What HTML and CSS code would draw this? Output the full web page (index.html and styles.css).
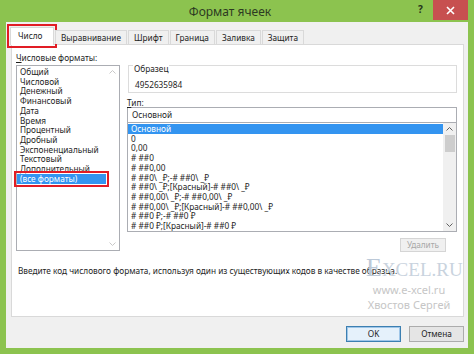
FILE: index.html
```html
<!DOCTYPE html>
<html lang="ru">
<head>
  <meta charset="UTF-8">
  <title>Формат ячеек</title>
  <link rel="stylesheet" href="styles.css">
</head>
<body>
  <div class="window">
    <div class="titlebar">
      <span class="title">Формат ячеек</span>
      <span class="help">?</span>
      <span class="close">
        <svg width="9" height="9" viewBox="0 0 9 9"><path d="M1 1L8 8M8 1L1 8" stroke="#fff" stroke-width="1.6"/></svg>
      </span>
    </div>

    <div class="dialog">
      <div class="tabs">
        <div class="tab active marked">Число</div>
        <div class="tab">Выравнивание</div>
        <div class="tab">Шрифт</div>
        <div class="tab">Граница</div>
        <div class="tab">Заливка</div>
        <div class="tab">Защита</div>
      </div>

      <div class="panel">
        <div class="columns">
          <div class="left">
            <div class="label"><u>Ч</u>исловые форматы:</div>
            <div class="listbox categories">
              <div class="items">
                <div class="item">Общий</div>
                <div class="item">Числовой</div>
                <div class="item">Денежный</div>
                <div class="item">Финансовый</div>
                <div class="item">Дата</div>
                <div class="item">Время</div>
                <div class="item">Процентный</div>
                <div class="item">Дробный</div>
                <div class="item">Экспоненциальный</div>
                <div class="item">Текстовый</div>
                <div class="item">Дополнительный</div>
                <div class="item selected marked">(все форматы)</div>
              </div>
              <div class="scrollbar disabled">
                <svg width="7" height="4" viewBox="0 0 7 4"><path d="M0.5 3.5L3.5 0.5L6.5 3.5" fill="none" stroke="#c8c8c8"/></svg>
                <svg width="7" height="4" viewBox="0 0 7 4"><path d="M0.5 0.5L3.5 3.5L6.5 0.5" fill="none" stroke="#c8c8c8"/></svg>
              </div>
            </div>
          </div>

          <div class="right">
            <div class="sample">
              <span class="legend">Образец</span>
              <div class="sample-value">4952635984</div>
            </div>
            <div class="label type-label"><u>Т</u>ип:</div>
            <div class="input">Основной</div>
            <div class="listbox types">
              <div class="items">
                <div class="item selected">Основной</div>
                <div class="item">0</div>
                <div class="item">0,00</div>
                <div class="item"># ##0</div>
                <div class="item"># ##0,00</div>
                <div class="item"># ##0\ _₽;-# ##0\ _₽</div>
                <div class="item"># ##0\ _₽;[Красный]-# ##0\ _₽</div>
                <div class="item"># ##0,00\ _₽;-# ##0,00\ _₽</div>
                <div class="item"># ##0,00\ _₽;[Красный]-# ##0,00\ _₽</div>
                <div class="item"># ##0 ₽;-# ##0 ₽</div>
                <div class="item"># ##0 ₽;[Красный]-# ##0 ₽</div>
              </div>
              <div class="scrollbar">
                <svg width="7" height="4" viewBox="0 0 7 4"><path d="M0.5 3.5L3.5 0.5L6.5 3.5" fill="none" stroke="#606060"/></svg>
                <div class="thumb"></div>
                <svg width="7" height="4" viewBox="0 0 7 4"><path d="M0.5 0.5L3.5 3.5L6.5 0.5" fill="none" stroke="#606060"/></svg>
              </div>
            </div>
            <div class="actions">
              <div class="btn small disabled">Удалить</div>
            </div>
          </div>
        </div>

        <p class="hint">Введите код числового формата, используя один из существующих кодов в качестве образца.</p>

        <!-- watermark over the panel -->
        <div class="watermark">
          <div class="wm-logo"><span class="wm-e">E</span>XCEL.RU</div>
          <div class="wm-line">www.e-xcel.ru</div>
          <div class="wm-line">Хвостов Сергей</div>
        </div>
      </div>

      <div class="footer">
        <div class="btn default">OK</div>
        <div class="btn">Отмена</div>
      </div>
    </div>
  </div>
</body>
</html>
```

FILE: styles.css
```css
body {
  margin: 0;
  font-family: 'Noto Sans', 'Open Sans', sans-serif;
  font-size: 8.25px;
  color: #1e1e1e;
  background-color: #8cc34f;
}
.window {
  width: 474px;
  height: 354px;
  overflow: hidden;
}
.titlebar {
  height: 22px;
  display: flex;
  align-items: flex-start;
}
.title {
  flex: 1;
  text-align: center;
  font-size: 12px;
  line-height: 24px;
  color: #2d3a22;
  padding-left: 42px;
}
.help {
  width: 12px;
  font-weight: bold;
  font-size: 10px;
  line-height: 18px;
  color: #26331c;
  margin-right: 3px;
}
.close {
  width: 35px;
  height: 20px;
  margin-right: 6px;
  background-color: #c75050;
  display: flex;
  align-items: center;
  justify-content: center;
}
.dialog {
  margin: 0 6px;
  height: 326px;
  background-color: #f0f0f0;
  padding: 5px 4px 0 5px;
  box-sizing: border-box;
}
.tabs {
  display: flex;
  align-items: flex-end;
  height: 17px;
  position: relative;
  z-index: 1;
}
.tab {
  height: 14px;
  line-height: 13px;
  padding: 0 5px;
  border: 1px solid #d9d9d9;
  border-bottom: none;
  background-color: #f0f0f0;
  margin-right: 1px;
  box-sizing: border-box;
  white-space: nowrap;
}
.tab.active {
  height: 18px;
  line-height: 16px;
  background-color: #fff;
  margin-left: -1px;
  margin-bottom: -1px;
  width: 44px;
  padding: 0 0 0 7px;
}
.marked {
  outline: 2px solid #e11d25;
  outline-offset: 1px;
}
.panel {
  position: relative;
  height: 273px;
  background-color: #fff;
  border: 1px solid #d9d9d9;
  box-sizing: border-box;
  padding: 7px 6px 0 4px;
}
.columns {
  display: flex;
  gap: 7px;
}
.left {
  width: 104px;
}
.right {
  width: 330px;
  padding-top: 13px;
}
.label {
  line-height: 11px;
  height: 13px;
}
.listbox {
  display: flex;
  border: 1px solid #abadb3;
  background-color: #fff;
  box-sizing: border-box;
}
.items {
  flex: 1;
  padding-top: 1px;
}
.item {
  height: 9.73px;
  line-height: 9.73px;
  padding-left: 3px;
  white-space: nowrap;
}
.item.selected {
  background-color: #3394f0;
  color: #fff;
}
.categories {
  height: 186px;
}
.scrollbar {
  width: 13px;
  display: flex;
  flex-direction: column;
  align-items: center;
  justify-content: space-between;
  padding: 4px 0;
  box-sizing: border-box;
}
.types {
  height: 110px;
}
.types .scrollbar {
  background-color: #f0f0f0;
  justify-content: flex-start;
}
.thumb {
  width: 10px;
  height: 17px;
  background-color: #cdcdcd;
  margin-top: 4px;
  margin-bottom: auto;
}
.sample {
  position: relative;
  height: 28px;
  border: 1px solid #dcdcdc;
  box-sizing: border-box;
  padding: 13px 0 0 6px;
  margin-left: 1px;
}
.legend {
  position: absolute;
  top: -2px;
  left: 4px;
  background-color: #fff;
  padding: 0 1px;
  line-height: 10px;
}
.sample-value {
  line-height: 11px;
}
.type-label {
  margin-top: 4px;
  height: 6px;
  line-height: 11px;
  margin-bottom: 4px;
}
.input {
  height: 15px;
  line-height: 14px;
  border: 1px solid #abadb3;
  border-bottom: none;
  box-sizing: border-box;
  padding-left: 4px;
}
.actions {
  display: flex;
  justify-content: flex-end;
  padding-top: 6px;
  padding-right: 11px;
}
.btn {
  width: 54px;
  height: 16px;
  line-height: 14px;
  text-align: center;
  border: 1px solid #acacac;
  background-color: #e5e5e5;
  box-sizing: border-box;
}
.btn.small {
  width: 46px;
  height: 14px;
  line-height: 12px;
}
.btn.disabled {
  color: #a8a8a8;
  border-color: #d5d5d5;
  background-color: #f0f0f0;
}
.btn.default {
  border-color: #3c7fb1;
  background-color: #e5f1fb;
  box-shadow: inset 0 0 0 1px #9fc6e8;
}
.hint {
  margin: 13px 0 0 2px;
  line-height: 11px;
}
.watermark {
  position: absolute;
  left: 344px;
  top: 211px;
  width: 106px;
  text-align: center;
}
.wm-logo {
  font-family: 'Liberation Serif', serif;
  font-size: 19px;
  line-height: 24px;
  color: #c9d3de;
  padding-left: 10px;
}
.wm-e {
  font-size: 26px;
  color: #bcc9d8;
}
.wm-line {
  color: #c6c6c6;
  font-size: 11px;
  line-height: 15px;
}
.footer {
  display: flex;
  justify-content: flex-end;
  gap: 8px;
  padding-top: 9px;
}
.footer .btn {
  width: 55px;
}
```
